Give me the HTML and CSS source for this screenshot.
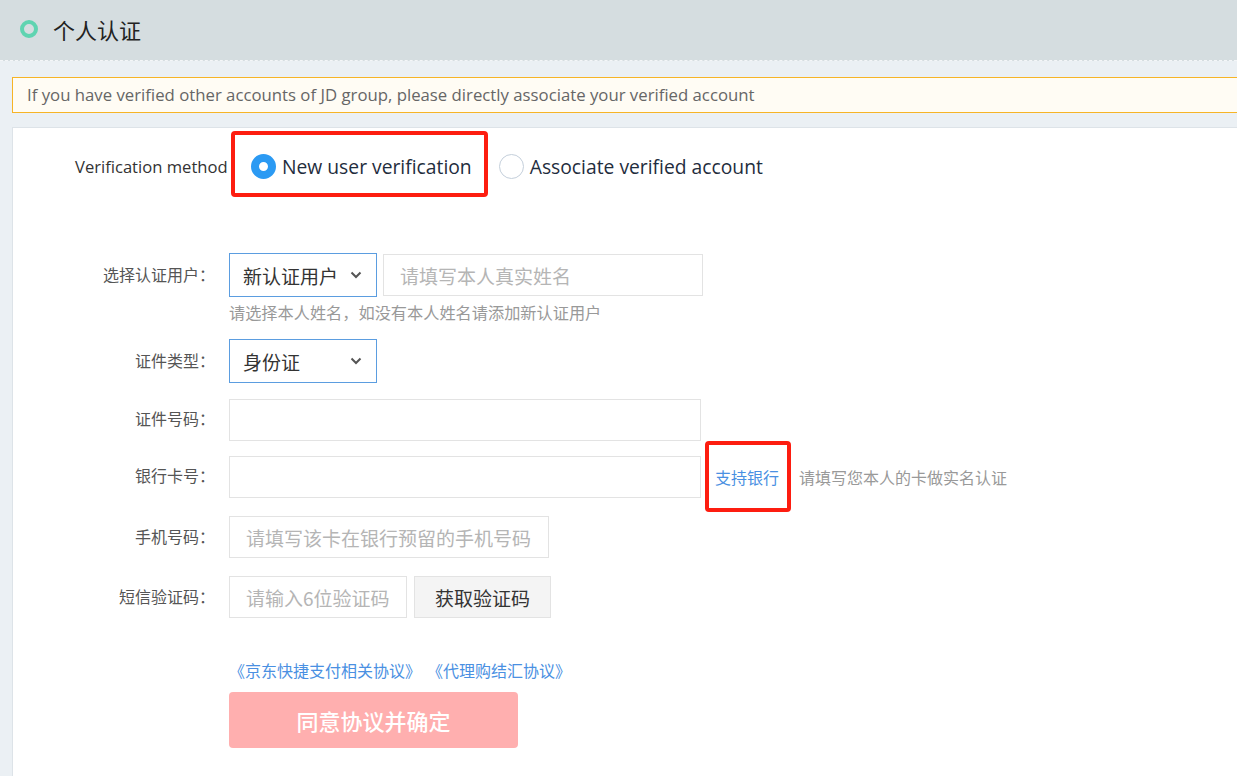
FILE: index.html
```html
<!DOCTYPE html>
<html lang="zh">
<head>
<meta charset="utf-8">
<title>个人认证</title>
<link rel="stylesheet" href="styles.css">
</head>
<body>
<header class="page-header">
  <span class="ring"></span>
  <h1 class="page-title">个人认证</h1>
</header>
<main class="content">
  <div class="notice">If you have verified other accounts of JD group, please directly associate your verified account</div>
  <section class="card">
    <div class="method-row">
      <span class="method-label">Verification method</span>
      <label class="radio-opt first">
        <span class="radio checked"></span>
        <span class="radio-text">New user verification</span>
        <span class="annot annot-method"></span>
      </label>
      <label class="radio-opt">
        <span class="radio"></span>
        <span class="radio-text">Associate verified account</span>
      </label>
    </div>

    <div class="form">
      <div class="row row-user">
        <span class="label">选择认证用户：</span>
        <div class="controls">
          <div class="select w-sel"><span>新认证用户</span><svg class="chev" width="12" height="8" viewBox="0 0 12 8"><path d="M1.5 1.5 L6 6 L10.5 1.5" fill="none" stroke="#555" stroke-width="2"/></svg></div>
          <div class="input w-name placeholder">请填写本人真实姓名</div>
        </div>
      </div>
      <div class="hint">请选择本人姓名，如没有本人姓名请添加新认证用户</div>

      <div class="row row-type">
        <span class="label">证件类型：</span>
        <div class="controls">
          <div class="select w-sel"><span>身份证</span><svg class="chev" width="12" height="8" viewBox="0 0 12 8"><path d="M1.5 1.5 L6 6 L10.5 1.5" fill="none" stroke="#555" stroke-width="2"/></svg></div>
        </div>
      </div>

      <div class="row row-id">
        <span class="label">证件号码：</span>
        <div class="controls">
          <div class="input w-long"></div>
        </div>
      </div>

      <div class="row row-bank">
        <span class="label">银行卡号：</span>
        <div class="controls">
          <div class="input w-long"></div>
          <a class="bank-link">支持银行<span class="annot annot-bank"></span></a>
          <span class="side-hint">请填写您本人的卡做实名认证</span>
        </div>
      </div>

      <div class="row row-phone">
        <span class="label">手机号码：</span>
        <div class="controls">
          <div class="input w-phone placeholder">请填写该卡在银行预留的手机号码</div>
        </div>
      </div>

      <div class="row row-sms">
        <span class="label">短信验证码：</span>
        <div class="controls">
          <div class="input w-sms placeholder">请输入6位验证码</div>
          <div class="btn-code">获取验证码</div>
        </div>
      </div>

      <div class="agreements">
        <a class="agree-link">《京东快捷支付相关协议》</a>
        <a class="agree-link">《代理购结汇协议》</a>
      </div>
      <div class="submit">同意协议并确定</div>
    </div>
  </section>
</main>
</body>
</html>
```

FILE: styles.css
```css
* { box-sizing: border-box; }
html, body { margin: 0; padding: 0; }
body {
  background: #ebf0f4;
  font-family: "Noto Sans CJK SC", "Open Sans", sans-serif;
  color: #333;
  width: 1237px;
  height: 776px;
  overflow: hidden;
}
.page-header {
  height: 61px;
  background: #d5dde0;
  border-bottom: 1px dashed #f4f6f8;
  display: flex;
  align-items: center;
  padding-left: 20px;
  padding-bottom: 3px;
}
.ring {
  width: 18px;
  height: 18px;
  border-radius: 50%;
  border: 4px solid #5fd4b1;
  display: block;
}
.page-title {
  margin: 0 0 0 15px;
  font-size: 22px;
  font-weight: 400;
  color: #222;
  line-height: 28px;
}
.content {
  padding: 16px 0 0 12px;
}
.notice {
  height: 36px;
  background: #fffcf4;
  border: 1px solid #f6b426;
  border-right: none;
  font-family: "Open Sans", sans-serif;
  font-size: 16.75px;
  color: #666;
  line-height: 33px;
  padding-left: 14px;
  white-space: nowrap;
}
.card {
  margin-top: 14px;
  background: #fff;
  border-top: 1px solid #dde3e8;
  border-left: 1px solid #dde3e8;
  height: 649px;
}
.method-row {
  display: flex;
  align-items: center;
  height: 30px;
  margin-top: 23px;
  padding-left: 62px;
}
.method-label {
  font-family: "Open Sans", sans-serif;
  font-size: 16.6px;
  color: #333;
  width: 176px;
  white-space: nowrap;
}
.radio-opt {
  position: relative;
  display: flex;
  align-items: center;
  height: 30px;
}
.radio-opt.first { margin-right: 27px; }
.radio {
  width: 25px;
  height: 25px;
  border-radius: 50%;
  border: 1px solid #c4cfdb;
  background: #fff;
  display: block;
  margin-right: 6px;
}
.radio.checked {
  border: 8.5px solid #2b9af3;
  background: #fff;
}
.radio-text {
  font-family: "Open Sans", sans-serif;
  font-size: 19.3px;
  color: #1f2d3d;
  white-space: nowrap;
}
.annot {
  position: absolute;
  border: 4px solid #fd1d10;
  border-radius: 4px;
  pointer-events: none;
}
.annot-method {
  left: -20px;
  top: -20px;
  width: 257px;
  height: 66px;
}
.form {
  margin-top: 72px;
}
.row {
  display: flex;
  align-items: center;
  height: 44px;
}
.label {
  width: 202px;
  text-align: right;
  font-size: 16px;
  line-height: 22px;
  padding-bottom: 3px;
  color: #555;
  white-space: nowrap;
}
.controls {
  display: flex;
  align-items: center;
  margin-left: 14px;
}
.select {
  height: 44px;
  border: 1px solid #5b9de0;
  display: flex;
  align-items: center;
  justify-content: space-between;
  padding: 0 14px 0 13px;
  font-size: 19px;
  color: #333;
}
.w-sel { width: 148px; }
.chev { display: block; }
.input {
  height: 42px;
  border: 1px solid #e3e3e3;
  background: #fff;
  display: flex;
  align-items: center;
  padding-left: 16px;
  font-size: 19px;
  white-space: nowrap;
}
.placeholder { color: #b5b5b5; }
.w-name { width: 320px; margin-left: 6px; }
.w-phone { width: 320px; }
.w-long { width: 472px; }
.w-sms { width: 178px; }
.hint {
  margin: 4px 0 0 216px;
  font-size: 16.2px;
  line-height: 22px;
  color: #999;
}
.row-type { margin-top: 16px; }
.row-id { margin-top: 15px; height: 43px; }
.row-bank { margin-top: 14px; height: 43px; }
.row-phone { margin-top: 18px; height: 42px; }
.row-sms { margin-top: 18px; height: 42px; }
.bank-link {
  position: relative;
  display: block;
  margin-left: 14px;
  font-size: 16px;
  line-height: 22px;
  color: #4a90e2;
}
.annot-bank {
  left: -10px;
  top: -25px;
  width: 86px;
  height: 71px;
}
.side-hint {
  margin-left: 20px;
  font-size: 16px;
  color: #999;
}
.btn-code {
  width: 137px;
  height: 42px;
  margin-left: 7px;
  background: #f4f4f4;
  border: 1px solid #e3e3e3;
  display: flex;
  align-items: center;
  justify-content: center;
  font-size: 19px;
  color: #333;
}
.agreements {
  margin: 41px 0 0 216px;
  font-size: 16px;
  line-height: 22px;
  display: flex;
  gap: 6px;
}
.agree-link { color: #4a90e2; }
.submit {
  margin: 11px 0 0 216px;
  width: 289px;
  height: 56px;
  border-radius: 4px;
  background: #ffafaf;
  color: #fff;
  font-size: 22px;
  font-weight: 500;
  display: flex;
  align-items: center;
  justify-content: center;
}
```
